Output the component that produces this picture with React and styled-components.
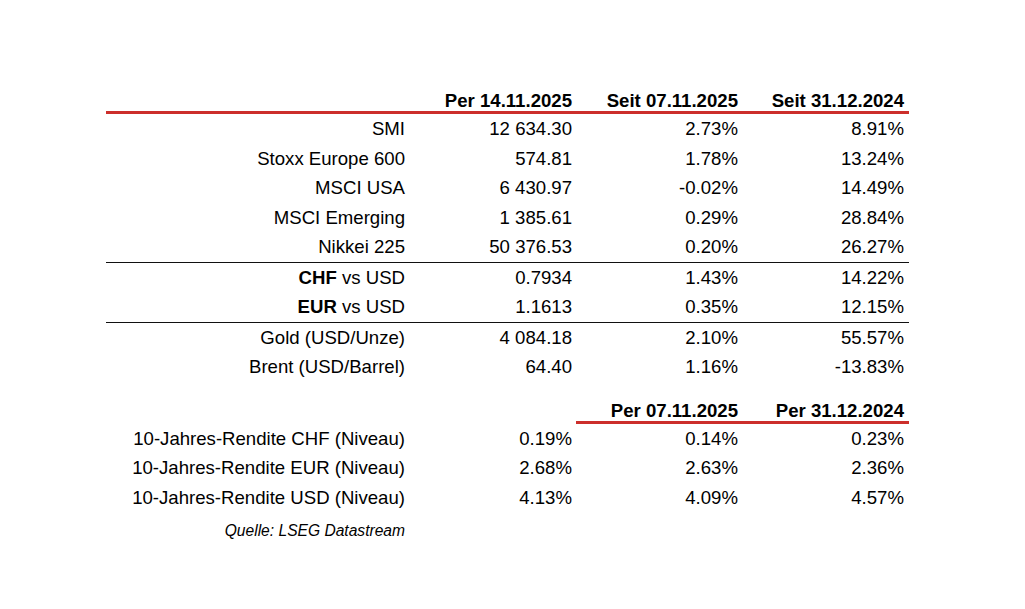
import React from "react";
import styled, { createGlobalStyle } from "styled-components";

const GlobalStyle = createGlobalStyle`
  html, body { margin: 0; padding: 0; background: #ffffff; }
  body { font-family: "Liberation Sans", Arial, sans-serif; color: #000; }
`;

const RED = "#cc2f2b";

const Table = styled.div`
  width: 803px;
  margin-left: 106px;
  padding-top: 90px;
  font-size: 18.6px;
`;

const gridCols = `299px 167px 166px 171px`;

const HeaderRow = styled.div`
  display: grid;
  grid-template-columns: ${gridCols};
  line-height: 21px;
  font-weight: bold;
  margin-top: ${(p) => (p.$gap ? "18px" : "0")};
  border-bottom: ${(p) => (p.$full ? `3px solid ${RED}` : "none")};
`;

const HeadCell = styled.div`
  text-align: right;
  box-sizing: border-box;
  padding-right: ${(p) => (p.$last ? "5px" : "0")};
  margin-left: ${(p) => (p.$indent ? "4px" : "0")};
  border-bottom: ${(p) => (p.$rule ? `3px solid ${RED}` : "none")};
`;

const Group = styled.div`
  border-top: ${(p) => (p.$divided ? "1px solid #111" : "none")};
`;

const Row = styled.div`
  display: grid;
  grid-template-columns: ${gridCols};
  line-height: 29.5px;
`;

const Cell = styled.div`
  text-align: right;
  white-space: nowrap;
  padding-right: ${(p) => (p.$last ? "5px" : "0")};
  strong { font-weight: bold; }
`;

const SourceRow = styled.div`
  display: grid;
  grid-template-columns: ${gridCols};
  margin-top: 10px;
  line-height: 18px;
`;

const Source = styled.div`
  text-align: right;
  font-style: italic;
  font-size: 15.6px;
`;

const groups = [
  [
    ["SMI", "12 634.30", "2.73%", "8.91%"],
    ["Stoxx Europe 600", "574.81", "1.78%", "13.24%"],
    ["MSCI USA", "6 430.97", "-0.02%", "14.49%"],
    ["MSCI Emerging", "1 385.61", "0.29%", "28.84%"],
    ["Nikkei 225", "50 376.53", "0.20%", "26.27%"],
  ],
  [
    [<><strong>CHF</strong> vs USD</>, "0.7934", "1.43%", "14.22%"],
    [<><strong>EUR</strong> vs USD</>, "1.1613", "0.35%", "12.15%"],
  ],
  [
    ["Gold (USD/Unze)", "4 084.18", "2.10%", "55.57%"],
    ["Brent (USD/Barrel)", "64.40", "1.16%", "-13.83%"],
  ],
];

const yields = [
  ["10-Jahres-Rendite CHF (Niveau)", "0.19%", "0.14%", "0.23%"],
  ["10-Jahres-Rendite EUR (Niveau)", "2.68%", "2.63%", "2.36%"],
  ["10-Jahres-Rendite USD (Niveau)", "4.13%", "4.09%", "4.57%"],
];

const DataRow = ({ r }) => (
  <Row>
    <Cell>{r[0]}</Cell>
    <Cell>{r[1]}</Cell>
    <Cell>{r[2]}</Cell>
    <Cell $last>{r[3]}</Cell>
  </Row>
);

export default function App() {
  return (
    <>
      <GlobalStyle />
      <Table>
        <HeaderRow $full>
          <HeadCell />
          <HeadCell>Per 14.11.2025</HeadCell>
          <HeadCell>Seit 07.11.2025</HeadCell>
          <HeadCell $last>Seit 31.12.2024</HeadCell>
        </HeaderRow>
        {groups.map((g, gi) => (
          <Group key={gi} $divided={gi > 0}>
            {g.map((r, ri) => (
              <DataRow key={ri} r={r} />
            ))}
          </Group>
        ))}
        <HeaderRow $gap>
          <HeadCell />
          <HeadCell />
          <HeadCell $rule $indent>Per 07.11.2025</HeadCell>
          <HeadCell $rule $last>Per 31.12.2024</HeadCell>
        </HeaderRow>
        <Group>
          {yields.map((r, ri) => (
            <DataRow key={ri} r={r} />
          ))}
        </Group>
        <SourceRow>
          <Source>Quelle: LSEG Datastream</Source>
        </SourceRow>
      </Table>
    </>
  );
}
